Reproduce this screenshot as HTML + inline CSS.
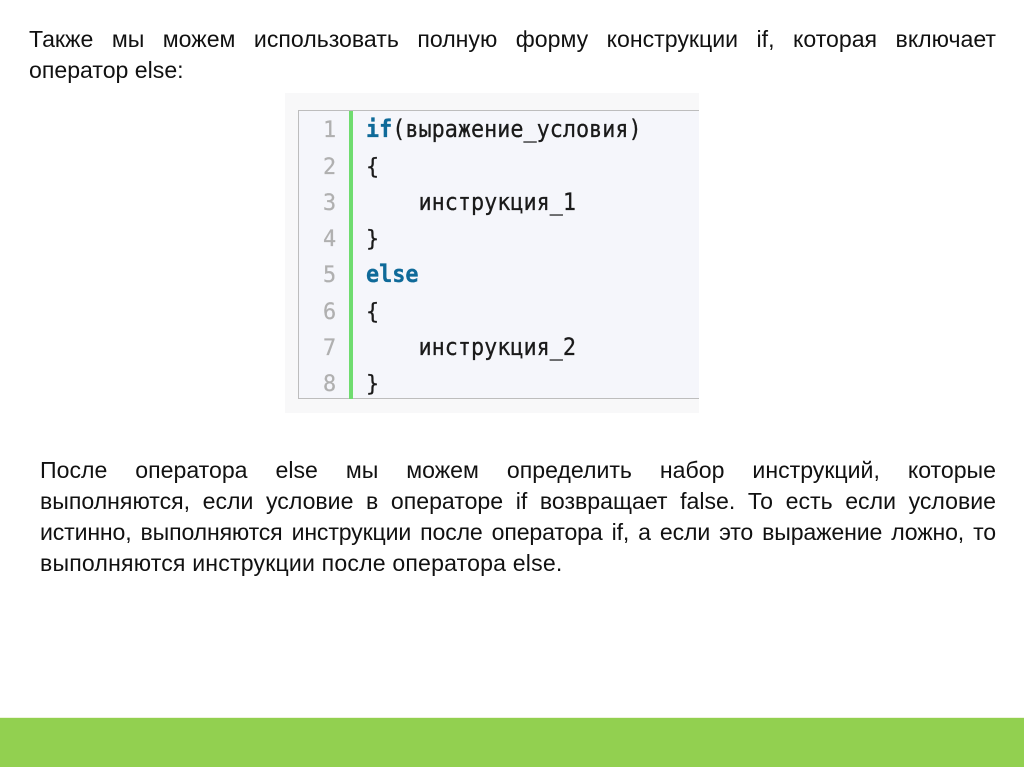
<!DOCTYPE html>
<html><head><meta charset="utf-8"><style>
html,body{margin:0;padding:0;background:#fff}
#p{position:relative;width:1024px;height:767px;overflow:hidden;background:#fff}
.l{position:absolute;font:23.1px/31px "Liberation Sans",sans-serif;color:#111;white-space:normal;text-align:justify;text-align-last:justify}
.n{text-align-last:left;white-space:nowrap}
#im{position:absolute;left:285px;top:93px;width:414px;height:320px;background:#f8f8f9}
#bx{position:absolute;left:298px;top:110px;width:401px;height:289px;box-sizing:border-box;border:1px solid #bdbdbd;border-right:0;background:#f5f6fb}
#gr{position:absolute;left:349px;top:111px;width:4px;height:288px;background:#6fdc6f}
.c,.g{position:absolute;font:21.8px/36px "DejaVu Sans Mono",monospace;white-space:pre}
.c{left:366px;color:#1a1a1a;-webkit-text-stroke:.25px #1a1a1a}
.t{transform:scaleY(1.12);transform-origin:0 24px}
.g{left:323px;color:#b0b0b0;-webkit-text-stroke:.25px #b0b0b0}
b{color:#0f6a99;-webkit-text-stroke:.25px #0f6a99}
#bar{position:absolute;left:0;top:718px;width:1024px;height:49px;background:#92d050}
#ln{position:absolute;left:0;top:717px;width:1024px;height:1px;background:#eef4dc}
</style></head><body><div id="p">
<div class="l" style="left:29px;top:24px;width:967px">Также мы можем использовать полную форму конструкции if, которая включает</div>
<div class="l n" style="left:29px;top:55px">оператор else:</div>
<div id="im"></div><div id="bx"></div><div id="gr"></div>
<div class="g" style="top:113px">1</div><div class="c t" style="top:113px"><b>if</b>(выражение_условия)</div>
<div class="g" style="top:150px">2</div><div class="c" style="top:150px">{</div>
<div class="g" style="top:186px">3</div><div class="c t" style="top:186px">    инструкция_1</div>
<div class="g" style="top:222px">4</div><div class="c" style="top:222px">}</div>
<div class="g" style="top:258px">5</div><div class="c t" style="top:258px"><b>else</b></div>
<div class="g" style="top:295px">6</div><div class="c" style="top:295px">{</div>
<div class="g" style="top:331px">7</div><div class="c t" style="top:331px">    инструкция_2</div>
<div class="g" style="top:367px">8</div><div class="c" style="top:367px">}</div>
<div class="l" style="left:40px;top:455px;width:956px">После оператора else мы можем определить набор инструкций, которые</div>
<div class="l" style="left:40px;top:486px;width:956px">выполняются, если условие в операторе if возвращает false. То есть если условие</div>
<div class="l" style="left:40px;top:517px;width:956px;letter-spacing:-.15px;word-spacing:-1.5px">истинно, выполняются инструкции после оператора if, а если это выражение ложно, то</div>
<div class="l n" style="left:40px;top:548px;letter-spacing:.18px">выполняются инструкции после оператора else.</div>
<div id="ln"></div><div id="bar"></div>
</div></body></html>
